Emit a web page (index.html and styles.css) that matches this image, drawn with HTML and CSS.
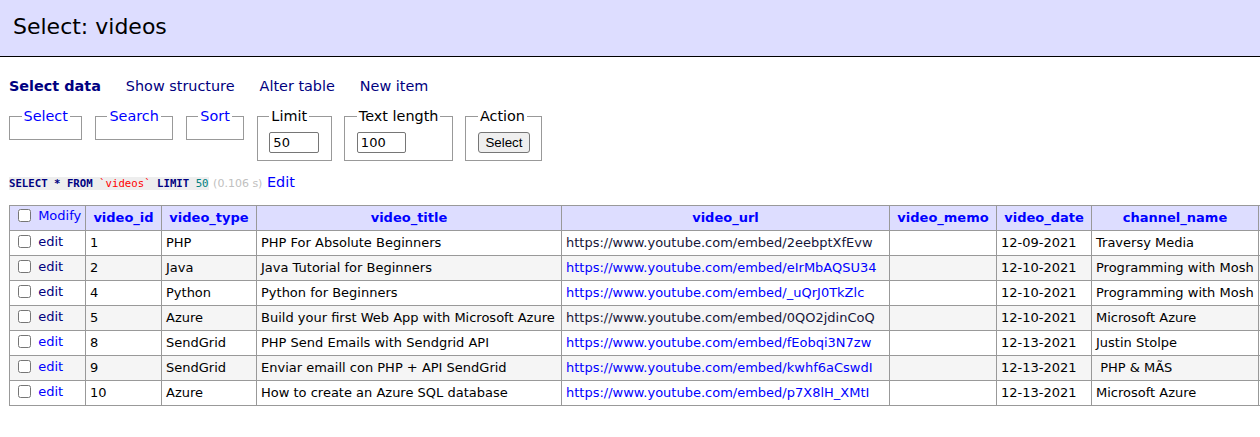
FILE: index.html
```html
<!DOCTYPE html>
<html lang="en">
<head>
<meta charset="utf-8">
<title>Select: videos</title>
<link rel="stylesheet" href="styles.css">
</head>
<body>
<h2 class="title">Select: videos</h2>
<div class="content">
  <p class="links">
    <a class="visited active" href="#">Select data</a>
    <a class="visited" href="#">Show structure</a>
    <a class="visited" href="#">Alter table</a>
    <a class="visited" href="#">New item</a>
  </p>
  <form class="filters">
    <fieldset><legend><a href="#">Select</a></legend></fieldset>
    <fieldset><legend><a href="#">Search</a></legend></fieldset>
    <fieldset><legend><a href="#">Sort</a></legend></fieldset>
    <fieldset><legend>Limit</legend><input class="num w50" type="text" value="50"></fieldset>
    <fieldset><legend>Text length</legend><input class="num w49" type="text" value="100"></fieldset>
    <fieldset><legend>Action</legend><button class="btn" type="button">Select</button></fieldset>
  </form>
  <p class="sql"><code><span class="kw">SELECT</span> <span class="kw">*</span> <span class="kw">FROM</span> <span class="bac">`videos`</span> <span class="kw">LIMIT</span> <span class="num-lit">50</span></code> <span class="time">(0.106 s)</span> <a href="#">Edit</a></p>
  <table class="grid">
    <colgroup>
      <col class="c1"><col class="c2"><col class="c3"><col class="c4"><col class="c5"><col class="c6"><col class="c7"><col class="c8"><col class="c9">
    </colgroup>
    <thead>
      <tr>
        <td class="chk"><input type="checkbox"> <a href="#">Modify</a></td>
        <th><a href="#">video_id</a></th>
        <th><a href="#">video_type</a></th>
        <th><a href="#">video_title</a></th>
        <th><a href="#">video_url</a></th>
        <th><a href="#">video_memo</a></th>
        <th><a href="#">video_date</a></th>
        <th><a href="#">channel_name</a></th>
        <th></th>
      </tr>
    </thead>
    <tbody>
      <tr>
        <td class="chk"><input type="checkbox"> <a class="visited" href="#">edit</a></td>
        <td>1</td><td>PHP</td><td>PHP For Absolute Beginners</td>
        <td><a class="seen" href="#">https://www.youtube.com/embed/2eebptXfEvw</a></td>
        <td></td><td>12-09-2021</td><td>Traversy Media</td><td></td>
      </tr>
      <tr>
        <td class="chk"><input type="checkbox"> <a class="visited" href="#">edit</a></td>
        <td>2</td><td>Java</td><td>Java Tutorial for Beginners</td>
        <td><a href="#">https://www.youtube.com/embed/eIrMbAQSU34</a></td>
        <td></td><td>12-10-2021</td><td>Programming with Mosh</td><td></td>
      </tr>
      <tr>
        <td class="chk"><input type="checkbox"> <a class="visited" href="#">edit</a></td>
        <td>4</td><td>Python</td><td>Python for Beginners</td>
        <td><a href="#">https://www.youtube.com/embed/_uQrJ0TkZlc</a></td>
        <td></td><td>12-10-2021</td><td>Programming with Mosh</td><td></td>
      </tr>
      <tr>
        <td class="chk"><input type="checkbox"> <a class="visited" href="#">edit</a></td>
        <td>5</td><td>Azure</td><td>Build your first Web App with Microsoft Azure</td>
        <td><a class="seen" href="#">https://www.youtube.com/embed/0QO2jdinCoQ</a></td>
        <td></td><td>12-10-2021</td><td>Microsoft Azure</td><td></td>
      </tr>
      <tr>
        <td class="chk"><input type="checkbox"> <a href="#">edit</a></td>
        <td>8</td><td>SendGrid</td><td>PHP Send Emails with Sendgrid API</td>
        <td><a href="#">https://www.youtube.com/embed/fEobqi3N7zw</a></td>
        <td></td><td>12-13-2021</td><td>Justin Stolpe</td><td></td>
      </tr>
      <tr>
        <td class="chk"><input type="checkbox"> <a href="#">edit</a></td>
        <td>9</td><td>SendGrid</td><td>Enviar emaill con PHP + API SendGrid</td>
        <td><a href="#">https://www.youtube.com/embed/kwhf6aCswdI</a></td>
        <td></td><td>12-13-2021</td><td>&nbsp;PHP &amp; MÃS</td><td></td>
      </tr>
      <tr>
        <td class="chk"><input type="checkbox"> <a href="#">edit</a></td>
        <td>10</td><td>Azure</td><td>How to create an Azure SQL database</td>
        <td><a href="#">https://www.youtube.com/embed/p7X8lH_XMtI</a></td>
        <td></td><td>12-13-2021</td><td>Microsoft Azure</td><td></td>
      </tr>
    </tbody>
  </table>
</div>
</body>
</html>
```
FILE: styles.css
```css
html, body {
  margin: 0;
}
body {
  font-family: "DejaVu Sans", Verdana, sans-serif;
  font-size: 14.4px;
  line-height: 18px;
  color: #000;
  background: #fff;
  overflow-x: hidden;
}
a {
  color: #0000ff;
  text-decoration: none;
}
a.visited {
  color: #000080;
}
a.seen {
  color: #15153a;
}
.title {
  margin: 0;
  font-size: 22px;
  font-weight: normal;
  line-height: 26px;
  padding: 14px 13px 16px;
  background: #ddf;
  border-bottom: 1px solid #000;
}
.content {
  padding: 0 0 0 9px;
}
.links {
  margin: 20px 0 0;
  display: flex;
}
.links a {
  margin-right: 25px;
  white-space: nowrap;
}
.links .active {
  font-weight: bold;
}
.filters {
  display: flex;
  gap: 12.5px;
  align-items: flex-start;
  margin: 12px 0 0;
}
.filters fieldset {
  margin: 0;
  padding: 7px 11.5px;
  border: 1px solid #999;
  min-width: 0;
}
.filters legend {
  padding: 0 2px;
  line-height: 18px;
}
.num {
  display: block;
  box-sizing: border-box;
  height: 21px;
  margin: 0;
  padding: 1px 3px;
  font: 13px/17px "DejaVu Sans", Verdana, sans-serif;
  border: 1px solid #767676;
  border-radius: 2px;
  background: #fff;
  color: #000;
}
.w50 { width: 50px; }
.w49 { width: 49px; }
.btn {
  display: block;
  box-sizing: border-box;
  width: 52px;
  height: 21px;
  margin: 0;
  padding: 1px 6px;
  font: 13.33px/17px "Liberation Sans", Arial, sans-serif;
  color: #000;
  background: #efefef;
  border: 1px solid #767676;
  border-radius: 3px;
}
.sql {
  margin: 12px 0 0;
}
.sql code {
  font-family: "DejaVu Sans Mono", monospace;
  font-size: 10.7px;
  background: #eee;
}
.kw { color: #000080; font-weight: bold; }
.bac { color: red; }
.num-lit { color: #008080; }
.time {
  color: silver;
  font-size: 11px;
}
.grid {
  border-collapse: collapse;
  table-layout: fixed;
  width: 1449px;
  margin: 12px 0 0;
  font-size: 13px;
  line-height: 18px;
}
.c1 { width: 76px; }
.c2 { width: 76px; }
.c3 { width: 95px; }
.c4 { width: 305px; }
.c5 { width: 328px; }
.c6 { width: 107px; }
.c7 { width: 95px; }
.c8 { width: 167px; }
.c9 { width: 200px; }
.grid td, .grid th {
  border: 1px solid #999;
  padding: 3px 4px;
  white-space: nowrap;
  overflow: hidden;
  text-align: left;
}
.grid thead td, .grid thead th {
  background: #ddf;
}
.grid thead th {
  text-align: center;
  font-weight: bold;
}
.grid tbody tr:nth-child(even) td {
  background: #f5f5f5;
}
.grid td.chk {
  padding-top: 2px;
  padding-bottom: 4px;
}
.grid thead td.chk {
  padding-top: 1px;
  padding-bottom: 5px;
}
.chk input {
  width: 13px;
  height: 13px;
  margin: 0 3px 0 4px;
  vertical-align: -2px;
}
```
